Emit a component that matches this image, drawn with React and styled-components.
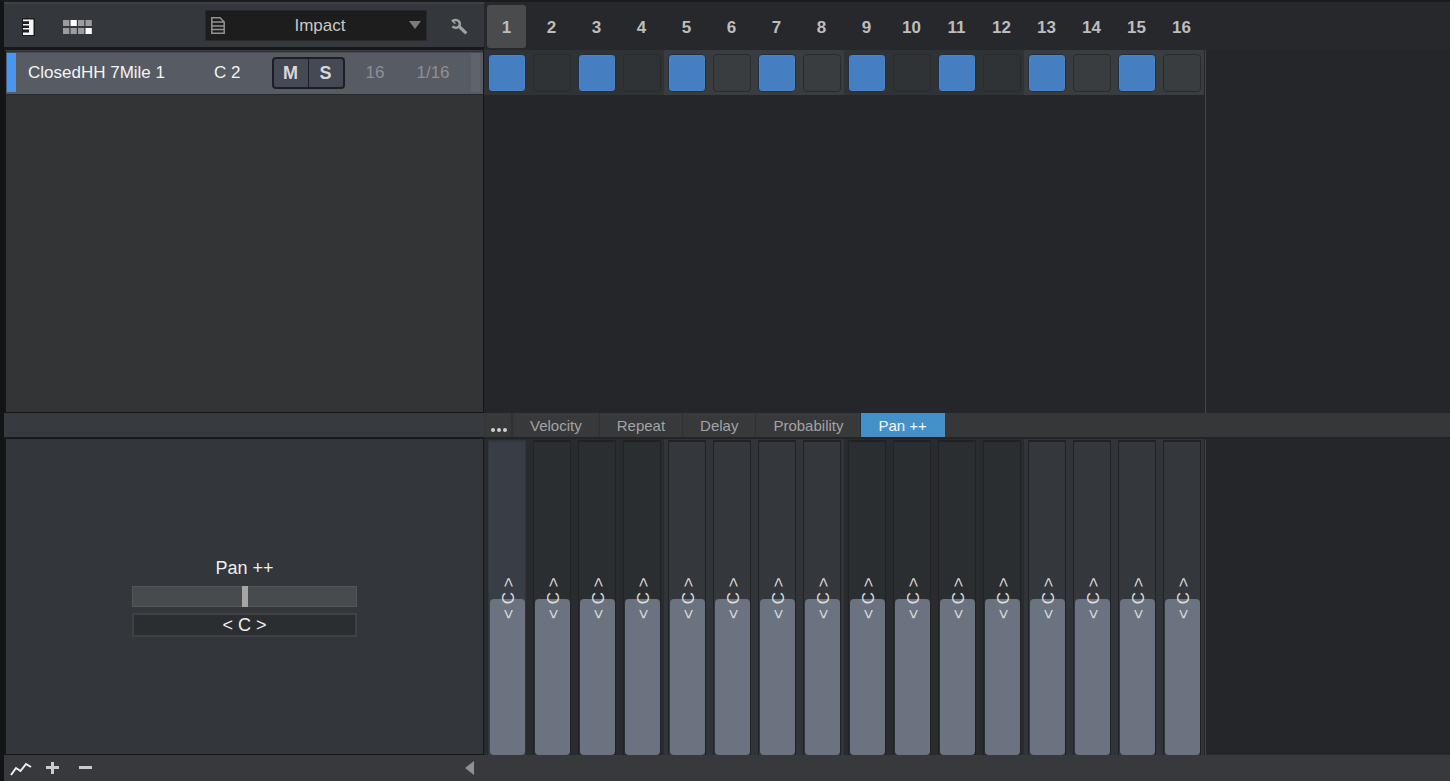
import React, { useState } from "react";
import styled, { createGlobalStyle, css } from "styled-components";

const GlobalStyle = createGlobalStyle`
  * {
    box-sizing: border-box;
  }
  body {
    margin: 0;
    background: #25262a;
    color: #e8e8e8;
    font-family: "Liberation Sans", Arial, sans-serif;
    font-size: 17px;
    line-height: 20px;
  }
  button, input, select {
    margin: 0;
    padding: 0;
    border: 0;
    color: inherit;
    font: inherit;
  }
`;

const Page = styled.div`
  display: grid;
  grid-template-columns: 480px 1fr;
  grid-template-rows: 48px minmax(120px, 1fr) 26px 316px 26px;
  min-height: 100vh;
  border-left: 4px solid #121415;
  border-top: 2px solid #1a1b1d;
`;

const Header = styled.header`
  display: flex;
  align-items: center;
  padding: 2px 16px 0 17px;
  background: #34373b;
  border-top: 2px solid #3e4043;
  border-bottom: 3px solid #17181a;
`;

const IconButton = styled.button`
  display: flex;
  background: none;
  margin-right: ${props => props.$gap || 0}px;
`;

const Preset = styled.label`
  display: flex;
  align-items: center;
  width: 222px;
  height: 31px;
  margin: 0 24px 3px auto;
  padding: 0 5px;
  background: #1d1d1d;
  border: 1px solid #2a2b2d;
`;

const PresetSelect = styled.select`
  flex: 1;
  appearance: none;
  padding: 2px 0 0 6px;
  background: none;
  color: #c8c8c8;
  text-align-last: center;
`;

const StepHeader = styled.div`
  display: grid;
  grid-template-columns: repeat(16, 45px);
  padding: 3px 0 2px;
  background: #27282b;
`;

const StepNumber = styled.div`
  display: flex;
  align-items: center;
  justify-content: center;
  margin: 0 3px;
  padding-top: 2px;
  border-radius: 3px;
  color: #bdbdbd;
  font-weight: bold;
  background: ${props => (props.$current ? "#4a4b4c" : "none")};
`;

const TrackList = styled.section`
  padding-top: 1px;
  background: #333435;
  border: 1px solid #151617;
  border-left-width: 2px;
  border-top-color: #3a3b3d;
`;

const TrackRow = styled.div`
  display: grid;
  grid-template-columns: 9px 198px 58px 73px 60px 1fr 9px;
  align-items: center;
  height: 43px;
  padding: 0 3px 2px 1px;
  background: #575b63;
  border-top: 1px solid #484b50;
  border-bottom: 1px solid #26272a;
`;

const TrackColor = styled.span`
  height: 39px;
  background: #4696f2;
`;

const TrackName = styled.span`
  padding-left: 12px;
  color: #f4f4f4;
`;

const TrackNote = styled.span`
  color: #f4f4f4;
`;

const TrackValue = styled.span`
  color: #8d9096;
  text-align: center;
`;

const TrackLength = styled(TrackValue)`
  padding-right: 10px;
`;

const TrackMeter = styled.span`
  height: 39px;
  background: #5f636b;
`;

const MuteSolo = styled.div`
  display: flex;
  height: 32px;
  background: #444953;
  border: 2px solid #1d1f22;
  border-radius: 4px;
`;

const ToggleButton = styled.button`
  flex: 1;
  padding-right: 1px;
  background: none;
  color: #d6d8da;
  font-size: 18px;
  font-weight: bold;
  & + & {
    border-left: 1px solid #1d1f22;
  }
`;

const Pattern = styled.section`
  background: #25262a;
`;

const StepCanvas = styled.div`
  display: grid;
  grid-template-columns: repeat(16, 45px);
  grid-template-rows: ${props => (props.$full ? "1fr" : "45px")};
  width: 722px;
  height: 100%;
  border-right: 1px solid #424449;
`;

const StepCell = styled.label`
  display: flex;
  align-items: center;
  padding: 1px 0 0 4px;
  background: ${props => (props.$alt ? "#3a3d3f" : "#303335")};
`;

const Step = styled.input`
  appearance: none;
  width: 38px;
  height: 38px;
  border: 1px solid #282a2c;
  border-radius: 4px;
  &:checked {
    background: #457fc1;
    border-color: #292e34;
    box-shadow: inset 0 0 0 1px #4586d4;
  }
`;

const LaneStrip = styled.div`
  background: #373a3e;
  border-bottom: 2px solid #191a1c;
`;

const Tabs = styled.nav`
  display: flex;
  padding-left: 2px;
  background: #363738;
  border-bottom: 2px solid #232426;
`;

const Tab = styled.button`
  padding: 2px 17px 0;
  background: #38393a;
  border-right: 1px solid #2f3032;
  color: #a2a3a5;
  font-size: 15px;
  ${props =>
    props.$active &&
    css`
      background: #4391c8;
      border-color: #4391c8;
      color: #f4f8fb;
    `}
`;

const MoreTab = styled(Tab)`
  display: flex;
  align-items: flex-end;
  gap: 2px;
  padding: 0 4px 5px 5px;
  border-right-width: 2px;
`;

const Dot = styled.span`
  width: 4px;
  height: 4px;
  border-radius: 2px;
  background: #d0d0d0;
`;

const PanPanel = styled.section`
  display: flex;
  flex-direction: column;
  align-items: center;
  justify-content: center;
  padding-top: 1px;
  background: #33363a;
  border: 1px solid #151617;
  border-left-width: 2px;
  border-top: 0;
`;

const PanLabel = styled.label`
  margin-bottom: 8px;
  color: #efefef;
  font-size: 18px;
`;

const PanSlider = styled.input`
  appearance: none;
  width: 225px;
  height: 21px;
  margin-bottom: 6px;
  background: #484b4e;
  border: 1px solid #54575a;
  &::-webkit-slider-thumb {
    appearance: none;
    width: 6px;
    height: 21px;
    background: #a5a5a5;
  }
`;

const PanValue = styled.input`
  width: 225px;
  height: 24px;
  padding-top: 1px;
  background: #2b2e30;
  border: 2px solid #3f4245;
  color: #efefef;
  font-size: 18px;
  text-align: center;
`;

const Lane = styled.section`
  background: #25262a;
`;

const LaneCell = styled.label`
  padding: 1px 3px 0 4px;
  background: ${props => (props.$alt ? "#313438" : "#2a2b2e")};
`;

const LaneTrack = styled.span`
  position: relative;
  display: flex;
  align-items: flex-end;
  justify-content: center;
  height: 100%;
  padding-left: 1px;
  border: 1px solid ${props => (props.$current ? "#30363b" : "#202225")};
  border-top-width: 2px;
  border-bottom: 0;
  background: ${props => (props.$current ? "#393e46" : props.$alt ? "#34373b" : "#2b2e30")};
`;

const LaneFill = styled.span`
  width: 100%;
  border-radius: 4px;
  background: #6b7381;
`;

const LaneText = styled.span`
  position: absolute;
  inset: 0 0 0 4px;
  display: flex;
  align-items: center;
  justify-content: center;
  writing-mode: vertical-rl;
  transform: rotate(180deg);
  color: #dcdcdc;
`;

const LaneInput = styled.input`
  position: absolute;
  inset: 0;
  width: 100%;
  height: 100%;
  opacity: 0;
  writing-mode: vertical-lr;
  direction: rtl;
`;

const Footer = styled.footer`
  grid-column: 1 / -1;
  display: flex;
  align-items: center;
  padding-left: 6px;
  background: #37393d;
`;

const FooterTools = styled.div`
  display: flex;
  align-items: center;
  width: 455px;
`;

const steps = Array.from({ length: 16 }, (_, i) => i);
const lanes = ["Velocity", "Repeat", "Delay", "Probability", "Pan ++"];
const isAlt = i => Math.floor(i / 4) % 2 === 1;

const PianoIcon = () => (
  <svg width="14" height="19" viewBox="0 0 14 19">
    <path d="M1 1h13v18H1z" fill="#1b1c1e" />
    <path d="M8 2.5h4.5v15.5H8z" fill="#f4f4f4" />
    <path d="M2 2.5h7v1.7H2zM2 7h7v1.4H2zM2 11h7v1.4H2zM2 15.5h7V18H2z" fill="#f4f4f4" />
  </svg>
);

const PatternIcon = () => (
  <svg width="29" height="14" viewBox="0 0 29 14">
    {[0, 1, 2, 3].map(c =>
      [0, 1].map(r => (
        <rect
          key={`${c}${r}`}
          x={c * 7.5}
          y={r * 8}
          width="6.3"
          height="6"
          fill={(c === 1 && r === 0) || (c === 3 && r === 1) ? "#ffffff" : "#9b9c9e"}
        />
      ))
    )}
  </svg>
);

const FileIcon = () => (
  <svg width="14" height="17" viewBox="0 0 14 17" fill="none" stroke="#929292" strokeWidth="1.5">
    <path d="M.8.8H9L13.2 5v11.2H.8zM1 5h12M1 9h12M1 12.5h12" />
  </svg>
);

const WrenchIcon = () => (
  <svg width="17" height="17" viewBox="0 0 17 17" fill="none" stroke="#a0a1a3">
    <path d="M1 3.4C3.4 1 8.8 1.8 8.8 5.8 8.8 9.8 4 11 1.4 8.4" strokeWidth="2.4" />
    <path d="M1.4 3l3 2.6" strokeWidth="1.4" />
    <path d="M7.5 7.8l7.8 7.6" strokeWidth="3.2" />
  </svg>
);

function App() {
  const [active, setActive] = useState("Pan ++");

  return (
    <>
      <GlobalStyle />
      <Page>
        <Header>
          <IconButton $gap={28} aria-label="Piano view">
            <PianoIcon />
          </IconButton>
          <IconButton aria-label="Pattern view">
            <PatternIcon />
          </IconButton>
          <Preset>
            <FileIcon />
            <PresetSelect aria-label="Preset">
              <option>Impact</option>
            </PresetSelect>
            <svg width="12" height="8" viewBox="0 0 12 8">
              <path d="M0 0h12L6 8z" fill="#7b7b7b" />
            </svg>
          </Preset>
          <IconButton aria-label="Settings">
            <WrenchIcon />
          </IconButton>
        </Header>
        <StepHeader>
          {steps.map(i => (
            <StepNumber key={i} $current={i === 0}>
              {i + 1}
            </StepNumber>
          ))}
        </StepHeader>

        <TrackList>
          <TrackRow>
            <TrackColor />
            <TrackName>ClosedHH 7Mile 1</TrackName>
            <TrackNote>C 2</TrackNote>
            <MuteSolo>
              <ToggleButton aria-label="Mute">M</ToggleButton>
              <ToggleButton aria-label="Solo">S</ToggleButton>
            </MuteSolo>
            <TrackValue>16</TrackValue>
            <TrackLength>1/16</TrackLength>
            <TrackMeter />
          </TrackRow>
        </TrackList>
        <Pattern>
          <StepCanvas>
            {steps.map(i => (
              <StepCell key={i} $alt={isAlt(i)}>
                <Step type="checkbox" aria-label={`Step ${i + 1}`} defaultChecked={i % 2 === 0} />
              </StepCell>
            ))}
          </StepCanvas>
        </Pattern>

        <LaneStrip />
        <Tabs>
          <MoreTab aria-label="More lanes">
            <Dot />
            <Dot />
            <Dot />
          </MoreTab>
          {lanes.map(name => (
            <Tab key={name} $active={name === active} onClick={() => setActive(name)}>
              {name}
            </Tab>
          ))}
        </Tabs>

        <PanPanel>
          <PanLabel htmlFor="pan">Pan ++</PanLabel>
          <PanSlider id="pan" type="range" min="0" max="100" defaultValue="50" />
          <PanValue aria-label="Pan value" defaultValue="< C >" />
        </PanPanel>
        <Lane>
          <StepCanvas $full>
            {steps.map(i => (
              <LaneCell key={i} $alt={isAlt(i)}>
                <LaneTrack $alt={isAlt(i)} $current={i === 0}>
                  <LaneFill style={{ height: "50%" }} />
                  <LaneText>&lt; C &gt;</LaneText>
                  <LaneInput type="range" aria-label={`Pan step ${i + 1}`} defaultValue="50" />
                </LaneTrack>
              </LaneCell>
            ))}
          </StepCanvas>
        </Lane>

        <Footer>
          <FooterTools>
            <IconButton $gap={14} aria-label="Automation">
              <svg width="22" height="16" viewBox="0 0 22 16" fill="none" stroke="#f0f0f0" strokeWidth="2">
                <path d="M1 15l5-7 4.5 3L16 4l5 3" />
              </svg>
            </IconButton>
            <IconButton $gap={20} aria-label="Zoom in">
              <svg width="13" height="13" viewBox="0 0 13 13">
                <path d="M5 0h3v4h5v3H8v5H5V7H0V4h5z" fill="#c9cbcc" />
              </svg>
            </IconButton>
            <IconButton aria-label="Zoom out">
              <svg width="13" height="13" viewBox="0 0 13 13">
                <path d="M0 4h13v3H0z" fill="#c9cbcc" />
              </svg>
            </IconButton>
          </FooterTools>
          <IconButton aria-label="Scroll left">
            <svg width="9" height="14" viewBox="0 0 9 14">
              <path d="M9 0v14L0 7z" fill="#8f9092" />
            </svg>
          </IconButton>
        </Footer>
      </Page>
    </>
  );
}

export default App;
